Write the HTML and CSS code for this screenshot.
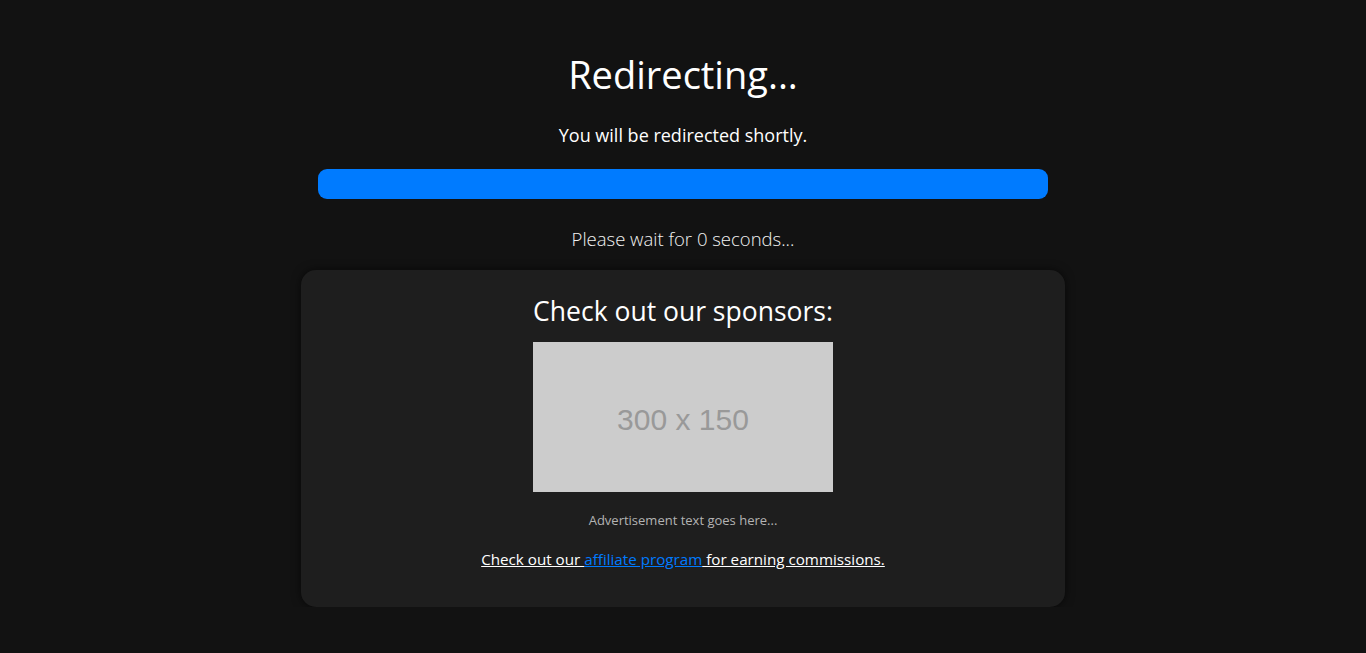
FILE: index.html
```html
<!DOCTYPE html>
<html lang="en">
<head>
<meta charset="utf-8">
<title>Redirecting...</title>
<link rel="stylesheet" href="styles.css">
</head>
<body>
<main class="page">
  <h1 class="title">Redirecting...</h1>
  <p class="subtitle">You will be redirected shortly.</p>
  <div class="progress"><div class="progress-fill"></div></div>
  <p class="wait">Please wait for <span class="count">0</span> seconds...</p>
  <section class="card">
    <h2 class="card-title">Check out our sponsors:</h2>
    <div class="ad-image">300 x 150</div>
    <p class="ad-text">Advertisement text goes here...</p>
    <p class="affiliate"><span class="affiliate-line">Check out our <a class="affiliate-link" href="#">affiliate program</a> for earning commissions.</span></p>
  </section>
</main>
</body>
</html>
```

FILE: styles.css
```css
html, body {
  margin: 0;
  padding: 0;
  background: #121212;
  color: #ffffff;
  font-family: "Open Sans", "Noto Sans", sans-serif;
}

.page {
  display: flex;
  flex-direction: column;
  align-items: center;
  padding-top: 50px;
}

.title {
  margin: 0;
  font-size: 38px;
  font-weight: 400;
  line-height: 48px;
}

.subtitle {
  margin: 25px 0 0;
  font-size: 18px;
  line-height: 24px;
}

.progress {
  margin-top: 22px;
  width: 730px;
  height: 30px;
  border-radius: 9px;
  background: #2a2a2a;
  overflow: hidden;
}

.progress-fill {
  width: 100%;
  height: 100%;
  background: #007bff;
}

.wait {
  margin: 28px 0 0;
  font-size: 18.5px;
  line-height: 24px;
  font-weight: 300;
  color: #f2f2f2;
}

.card {
  margin-top: 19px;
  width: 764px;
  box-sizing: border-box;
  padding: 24px 20px 37px;
  background: #1e1e1e;
  border-radius: 15px;
  box-shadow: 0 0 10px rgba(0, 0, 0, 0.6);
  display: flex;
  flex-direction: column;
  align-items: center;
}

.card-title {
  margin: 0;
  font-size: 26.5px;
  font-weight: 400;
  line-height: 34px;
}

.ad-image {
  margin-top: 14px;
  width: 300px;
  height: 150px;
  box-sizing: border-box;
  padding-top: 5px;
  background: #cccccc;
  color: #999999;
  font-family: "Liberation Sans", Arial, sans-serif;
  font-size: 30px;
  display: flex;
  align-items: center;
  justify-content: center;
}

.ad-text {
  margin: 19px 0 0;
  font-size: 13px;
  line-height: 18px;
  color: #b3b3b3;
}

.affiliate {
  margin: 19px 0 0;
  font-size: 15.2px;
  line-height: 22px;
}

.affiliate-line {
  color: #ffffff;
  text-decoration: underline;
}

.affiliate-link {
  color: #007bff;
  text-decoration: underline;
}
```
